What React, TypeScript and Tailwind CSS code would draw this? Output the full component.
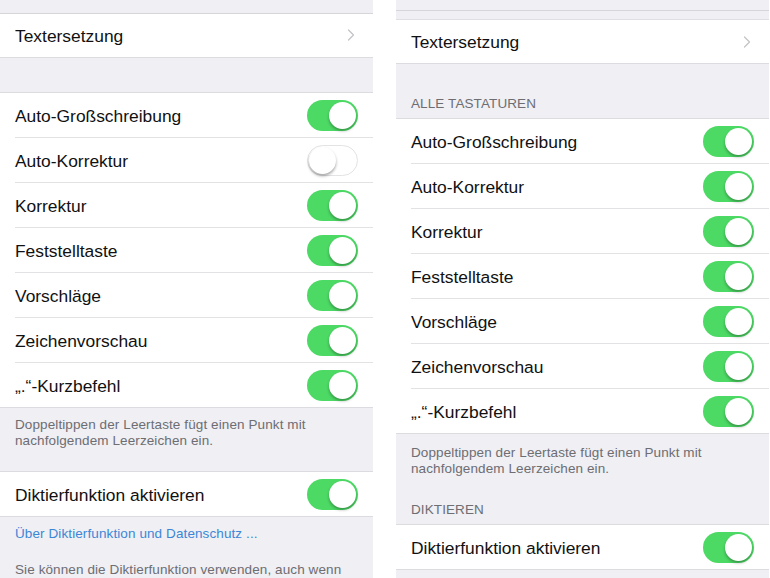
import { ChevronRight } from "lucide-react";

type TRow = { label: string; on: boolean };

const rows: TRow[] = [
  { label: "Auto-Großschreibung", on: true },
  { label: "Auto-Korrektur", on: false },
  { label: "Korrektur", on: true },
  { label: "Feststelltaste", on: true },
  { label: "Vorschläge", on: true },
  { label: "Zeichenvorschau", on: true },
  { label: "„.“-Kurzbefehl", on: true },
];

function Toggle({ on }: { on: boolean }) {
  return (
    <div
      className={
        on
          ? "relative h-[31px] w-[51px] rounded-full bg-[#4cd964]"
          : "relative h-[31px] w-[51px] rounded-full border border-[#e3e3e6] bg-white"
      }
    >
      <div
        className={
          on
            ? "absolute right-[2px] top-[2px] h-[27px] w-[27px] rounded-full bg-white shadow-[0_2px_3px_rgba(0,0,0,0.3)]"
            : "absolute left-[1px] top-[1px] h-[27px] w-[27px] rounded-full bg-white shadow-[0_2px_3px_rgba(0,0,0,0.35)]"
        }
      />
    </div>
  );
}

function ToggleRow({ row, last }: { row: TRow; last?: boolean }) {
  return (
    <div className="bg-white pl-[15px]">
      <div
        className={
          last
            ? "flex h-[44px] items-center justify-between pr-[15px]"
            : "flex h-[45px] items-center justify-between border-b border-[#e2e2e5] pr-[15px]"
        }
      >
        <span className="translate-y-[1px] text-[17.4px] text-[#111]">{row.label}</span>
        <Toggle on={row.on} />
      </div>
    </div>
  );
}

function LinkRow() {
  return (
    <div className="flex h-[44px] items-center justify-between border-b border-[#dcdce0] bg-white pl-[15px] pr-[12px]">
      <span className="translate-y-[1px] text-[17.4px] text-[#111]">Textersetzung</span>
      <ChevronRight size={20} strokeWidth={1.5} className="text-[#c4c4c8]" />
    </div>
  );
}

function Footnote() {
  return (
    <p className="px-[15px] text-[13.5px] leading-[16px] tracking-[0.1px] text-[#6d6d72]">
      Doppeltippen der Leertaste fügt einen Punkt mit
      <br />
      nachfolgendem Leerzeichen ein.
    </p>
  );
}

function LeftScreen() {
  return (
    <div className="flex w-[373px] flex-col bg-[#efeff4]">
      <div className="h-[14px] border-b border-[#d6d6da]" />
      <LinkRow />
      <div className="h-[36px] border-b border-[#dcdce0]" />
      {rows.map((r, i) => (
        <ToggleRow key={r.label} row={r} last={i === rows.length - 1} />
      ))}
      <div className="h-[65px] border-y border-[#dcdce0] pt-[9px]">
        <Footnote />
      </div>
      <ToggleRow row={{ label: "Diktierfunktion aktivieren", on: true }} last />
      <div className="flex flex-1 flex-col border-t border-[#dcdce0] px-[15px] pt-[9px]">
        <span className="text-[13.5px] leading-[16px] tracking-[0.1px] text-[#3b87d6]">
          Über Diktierfunktion und Datenschutz ...
        </span>
        <span className="mt-[20px] text-[13.5px] leading-[16px] tracking-[0.1px] text-[#6d6d72]">
          Sie können die Diktierfunktion verwenden, auch wenn
        </span>
      </div>
    </div>
  );
}

function RightScreen() {
  return (
    <div className="flex w-[373px] flex-col bg-[#efeff4]">
      <div className="h-[11px] border-b border-[#d6d6da]" />
      <div className="h-[9px] border-b border-[#e0e0e4]" />
      <LinkRow />
      <div className="flex h-[55px] items-end border-b border-[#dcdce0] px-[15px] pb-[6px]">
        <span className="text-[13.5px] leading-[16px] tracking-[0.1px] text-[#6d6d72]">
          ALLE TASTATUREN
        </span>
      </div>
      {rows.map((r, i) => (
        <ToggleRow
          key={r.label}
          row={i === 1 ? { ...r, on: true } : r}
          last={i === rows.length - 1}
        />
      ))}
      <div className="flex h-[92px] flex-col border-y border-[#dcdce0] pt-[11px]">
        <Footnote />
        <span className="mt-auto px-[15px] pb-[6px] text-[13.5px] leading-[16px] tracking-[0.1px] text-[#6d6d72]">
          DIKTIEREN
        </span>
      </div>
      <ToggleRow row={{ label: "Diktierfunktion aktivieren", on: true }} last />
      <div className="flex-1 border-t border-[#dcdce0]" />
    </div>
  );
}

export default function App() {
  return (
    <div
      className="flex h-[578px] w-[770px] gap-[23px] overflow-hidden bg-white"
      style={{ fontFamily: "'Liberation Sans', Arial, sans-serif" }}
    >
      <LeftScreen />
      <RightScreen />
    </div>
  );
}
